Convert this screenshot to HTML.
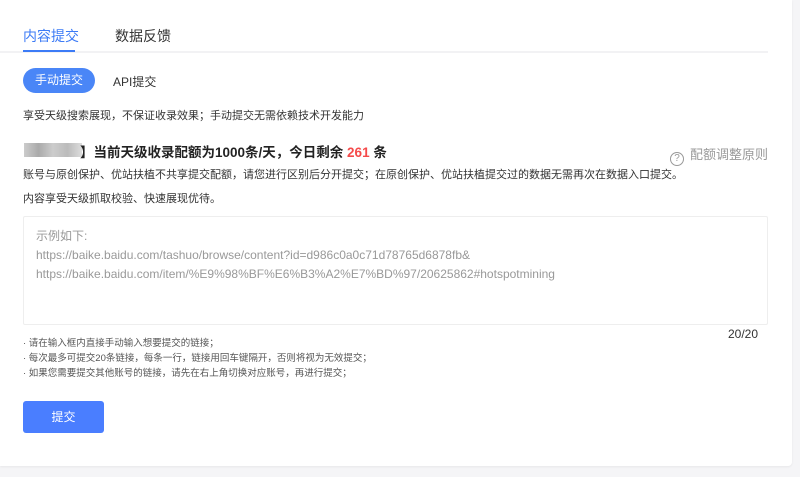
<!DOCTYPE html>
<html><head><meta charset="utf-8"><style>
*{margin:0;padding:0;box-sizing:border-box}
body{width:800px;height:477px;background:#f5f5f7;font-family:"Liberation Sans","Noto Sans CJK SC",sans-serif;position:relative;overflow:hidden;color:#333}
.panel{position:absolute;left:0;top:0;width:792px;height:466px;background:#fff;border-radius:0 0 4px 0;box-shadow:0 1px 2px rgba(0,0,0,.06)}
.a{position:absolute;white-space:nowrap}
</style></head><body>
<div class="panel">
<div class="a" style="left:23px;top:26px;font-size:14px;color:#3c7bf6">内容提交</div>
<div class="a" style="left:115px;top:26px;font-size:14px;color:#333">数据反馈</div>
<div class="a" style="left:0;top:51px;width:768px;height:2px;background:#f2f2f4"></div>
<div class="a" style="left:23px;top:50px;width:52px;height:2px;background:#3c7bf6"></div>
<div class="a" style="left:23px;top:68px;width:72px;height:25px;border-radius:13px;background:#4a86f7;color:#fff;font-size:12px;line-height:25px;text-align:center">手动提交</div>
<div class="a" style="left:113px;top:73px;font-size:12px;color:#333">API提交</div>
<div class="a" style="left:23px;top:107px;font-size:11px;color:#333">享受天级搜索展现，不保证收录效果；手动提交无需依赖技术开发能力</div>
<div class="a" style="left:24px;top:143px;width:58px;height:14px;background:linear-gradient(90deg,#ccc,#aaa,#ccc,#bbb,#ddd)"></div>
<div class="a" style="left:80px;top:141px;font-size:13.5px;font-weight:bold;color:#222">】当前天级收录配额为1000条/天，今日剩余 <span style="color:#f54a4a">261</span> 条</div>
<div class="a" style="left:670px;top:144px;font-size:13px;color:#999"><span style="display:inline-block;width:14px;height:14px;border:1px solid #999;border-radius:50%;font-size:10px;line-height:12px;text-align:center;vertical-align:-2px;margin-right:6px">?</span>配额调整原则</div>
<div class="a" style="left:23px;top:166px;font-size:11px;color:#333">账号与原创保护、优站扶植不共享提交配额，请您进行区别后分开提交；在原创保护、优站扶植提交过的数据无需再次在数据入口提交。</div>
<div class="a" style="left:23px;top:190px;font-size:11px;color:#333">内容享受天级抓取校验、快速展现优待。</div>
<div class="a" style="left:23px;top:216px;width:745px;height:109px;border:1px solid #eee;border-radius:2px"></div>
<div class="a" style="left:36px;top:227px;font-size:12px;color:#999;line-height:19px">示例如下:<br>https://baike.baidu.com/tashuo/browse/content?id=d986c0a0c71d78765d6878fb&amp;<br>https://baike.baidu.com/item/%E9%98%BF%E6%B3%A2%E7%BD%97/20625862#hotspotmining</div>
<div class="a" style="left:728px;top:327px;font-size:12px;color:#333">20/20</div>
<div class="a" style="left:23px;top:336px;font-size:9.5px;color:#555;line-height:15px">· 请在输入框内直接手动输入想要提交的链接；<br>· 每次最多可提交20条链接，每条一行，链接用回车键隔开，否则将视为无效提交；<br>· 如果您需要提交其他账号的链接，请先在右上角切换对应账号，再进行提交；</div>
<div class="a" style="left:23px;top:401px;width:81px;height:32px;border-radius:3px;background:#4a7eff;color:#fff;font-size:12px;line-height:32px;text-align:center">提交</div>
</div>
</body></html>
